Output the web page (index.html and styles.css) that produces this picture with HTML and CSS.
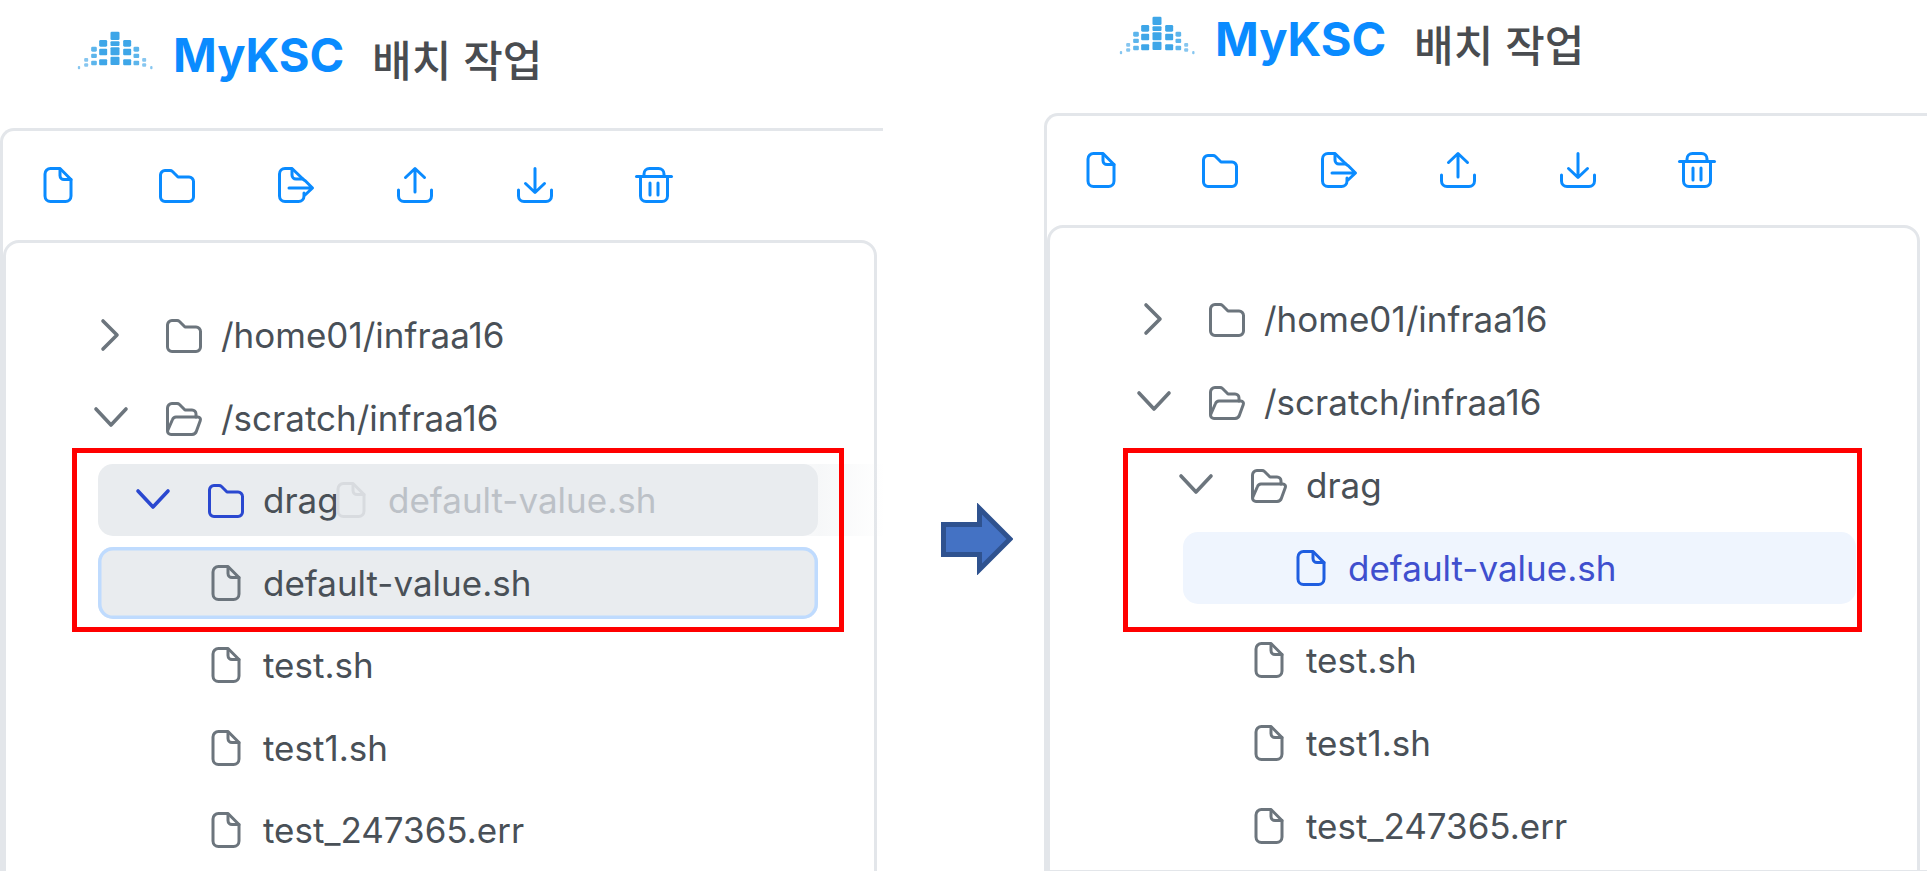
FILE: index.html
```html
<!DOCTYPE html>
<html lang="ko">
<head>
<meta charset="utf-8">
<title>MyKSC 배치 작업</title>
<link rel="stylesheet" href="styles.css">
</head>
<body>
<svg class="defs" width="0" height="0" aria-hidden="true">
  <defs>
    <symbol id="i-file" viewBox="0 0 40 40"><path d="M12.500 3.500H22L33 14.500V31a5.500 5.500 0 0 1-5.500 5.500h-15A5.500 5.500 0 0 1 7 31V9a5.500 5.500 0 0 1 5.500-5.500Z"/><path d="M22 4v6.500a4 4 0 0 0 4 4h7"/></symbol>
    <symbol id="i-folder" viewBox="0 0 40 40"><path d="M8 5.500h5a3.500 3.500 0 0 1 2.500 1L21 12h11a4.500 4.500 0 0 1 4.500 4.500V32a4.500 4.500 0 0 1-4.500 4.500H8A4.500 4.500 0 0 1 3.500 32V10A4.500 4.500 0 0 1 8 5.500Z"/></symbol>
    <symbol id="i-folder-open" viewBox="0 0 40 40"><path d="M3.500 32V10A4.500 4.500 0 0 1 8 5.500h5a3.500 3.500 0 0 1 2.500 1L21 12h7a4 4 0 0 1 4 4v3"/><path d="M3.500 33 8.500 21.500A4 4 0 0 1 12 19h22a2.500 2.500 0 0 1 2.300 3.400L32.500 33a5 5 0 0 1-4.500 3.500H7A3.500 3.500 0 0 1 3.500 33Z"/></symbol>
    <symbol id="i-export" viewBox="0 0 40 40"><path d="M28 15 16 3.500H9A5.500 5.500 0 0 0 3.500 9v22A5.500 5.500 0 0 0 9 36.500h13.500A5.500 5.500 0 0 0 28 31v-3"/><path d="M16 4v6a4 4 0 0 0 4 4h7"/><path d="M13 23h23M29 15.500 36.500 23 29 30"/></symbol>
    <symbol id="i-upload" viewBox="0 0 40 40"><path d="M3.500 25v6A5.500 5.500 0 0 0 9 36.500h22a5.500 5.500 0 0 0 5.500-5.500v-6"/><path d="M20 27V4M10.500 12.500 20 3.500l9.500 9"/></symbol>
    <symbol id="i-download" viewBox="0 0 40 40"><path d="M3.500 25v6A5.500 5.500 0 0 0 9 36.500h22a5.500 5.500 0 0 0 5.500-5.500v-6"/><path d="M20 3.500V27M10.500 18.500 20 27.500l9.500-9"/></symbol>
    <symbol id="i-trash" viewBox="0 0 40 40"><path d="M2.500 11.500h35"/><path d="M10 11V9a5.500 5.500 0 0 1 5.500-5.500h9A5.500 5.500 0 0 1 30 9v2"/><path d="M6.500 11.500V31a5.500 5.500 0 0 0 5.500 5.500h16a5.500 5.500 0 0 0 5.500-5.500V11.500"/><path d="M16 18v12M24 18v12"/></symbol>
    <symbol id="i-right" viewBox="0 0 40 40"><path d="M12 6 26 20 12 34"/></symbol>
    <symbol id="i-down" viewBox="0 0 40 40"><path d="M5 11 20 27 35 11"/></symbol>
    <symbol id="i-logo" viewBox="50 60 230 120">
      <g fill="#3ea6e8">
        <rect x="150" y="65" width="27" height="25" rx="4"/><rect x="150" y="94" width="27" height="14" rx="3"/><rect x="150" y="112" width="27" height="24" rx="3"/><rect x="150" y="140" width="27" height="25" rx="3"/>
        <rect x="116" y="90" width="24" height="20" rx="4"/><rect x="116" y="116" width="24" height="20" rx="3"/><rect x="116" y="148" width="24" height="18" rx="3"/>
        <rect x="188" y="90" width="24" height="20" rx="4"/><rect x="188" y="116" width="24" height="20" rx="3"/><rect x="188" y="148" width="24" height="18" rx="3"/>
      </g>
      <g fill="#5cb5ec">
        <rect x="92" y="110" width="17" height="15" rx="4"/><rect x="92" y="131" width="17" height="13" rx="3"/><rect x="92" y="152" width="17" height="14" rx="3"/>
        <rect x="219" y="110" width="17" height="15" rx="4"/><rect x="219" y="131" width="17" height="13" rx="3"/><rect x="219" y="152" width="17" height="14" rx="3"/>
      </g>
      <g fill="#86c6f0">
        <rect x="71" y="144" width="12" height="11" rx="3"/><rect x="71" y="160" width="12" height="10" rx="3"/>
        <rect x="245" y="144" width="12" height="11" rx="3"/><rect x="245" y="160" width="12" height="10" rx="3"/>
        <rect x="52" y="168" width="7" height="10" rx="3"/><rect x="269" y="168" width="7" height="10" rx="3"/>
      </g>
    </symbol>
  </defs>
</svg>

<main class="canvas">
  <section class="shot shot-before">
    <header class="head">
      <svg class="logo-mark"><use href="#i-logo"/></svg>
      <span class="brand">MyKSC</span>
      <h1 class="title">배치 작업</h1>
    </header>
    <div class="outer">
      <div class="toolbar">
        <svg class="ico"><use href="#i-file"/></svg>
        <svg class="ico"><use href="#i-folder"/></svg>
        <svg class="ico"><use href="#i-export"/></svg>
        <svg class="ico"><use href="#i-upload"/></svg>
        <svg class="ico"><use href="#i-download"/></svg>
        <svg class="ico"><use href="#i-trash"/></svg>
      </div>
      <div class="inner">
        <ul class="tree">
          <li class="row"><svg class="chev"><use href="#i-right"/></svg><svg class="nico"><use href="#i-folder"/></svg><span>/home01/infraa16</span></li>
          <li class="row"><svg class="chev"><use href="#i-down"/></svg><svg class="nico"><use href="#i-folder-open"/></svg><span>/scratch/infraa16</span></li>
          <li>
            <ul class="tree sub">
              <li class="row hover"><svg class="chev"><use href="#i-down"/></svg><svg class="nico"><use href="#i-folder"/></svg><span>drag</span>
                <div class="ghost"><svg class="nico"><use href="#i-file"/></svg><span>default-value.sh</span></div>
              </li>
              <li class="row dragging"><span class="chev"></span><svg class="nico"><use href="#i-file"/></svg><span>default-value.sh</span></li>
              <li class="row"><span class="chev"></span><svg class="nico"><use href="#i-file"/></svg><span>test.sh</span></li>
              <li class="row"><span class="chev"></span><svg class="nico"><use href="#i-file"/></svg><span>test1.sh</span></li>
              <li class="row"><span class="chev"></span><svg class="nico"><use href="#i-file"/></svg><span>test_247365.err</span></li>
            </ul>
          </li>
        </ul>
      </div>
    </div>
    <div class="mark mark-left"></div>
  </section>

  <div class="arrow-col">
    <svg class="arrow" viewBox="0 0 72 72"><path d="M2.500 21.500H38.500V5.500L69 36 38.500 66.500V51.500H2.500Z"/></svg>
  </div>

  <section class="shot shot-after">
    <header class="head">
      <svg class="logo-mark"><use href="#i-logo"/></svg>
      <span class="brand">MyKSC</span>
      <h1 class="title">배치 작업</h1>
    </header>
    <div class="outer">
      <div class="toolbar">
        <svg class="ico"><use href="#i-file"/></svg>
        <svg class="ico"><use href="#i-folder"/></svg>
        <svg class="ico"><use href="#i-export"/></svg>
        <svg class="ico"><use href="#i-upload"/></svg>
        <svg class="ico"><use href="#i-download"/></svg>
        <svg class="ico"><use href="#i-trash"/></svg>
      </div>
      <div class="inner">
        <ul class="tree wide">
          <li class="row"><svg class="chev"><use href="#i-right"/></svg><svg class="nico"><use href="#i-folder"/></svg><span>/home01/infraa16</span></li>
          <li class="row"><svg class="chev"><use href="#i-down"/></svg><svg class="nico"><use href="#i-folder-open"/></svg><span>/scratch/infraa16</span></li>
          <li>
            <ul class="tree sub wide">
              <li class="row"><svg class="chev"><use href="#i-down"/></svg><svg class="nico"><use href="#i-folder-open"/></svg><span>drag</span></li>
              <li>
                <ul class="tree sub wide">
                  <li class="row selected"><span class="chev"></span><svg class="nico"><use href="#i-file"/></svg><span>default-value.sh</span></li>
                </ul>
              </li>
              <li class="row after-open"><span class="chev"></span><svg class="nico"><use href="#i-file"/></svg><span>test.sh</span></li>
              <li class="row"><span class="chev"></span><svg class="nico"><use href="#i-file"/></svg><span>test1.sh</span></li>
              <li class="row"><span class="chev"></span><svg class="nico"><use href="#i-file"/></svg><span>test_247365.err</span></li>
            </ul>
          </li>
        </ul>
      </div>
    </div>
    <div class="mark mark-right"></div>
  </section>
</main>
</body>
</html>
```

FILE: styles.css
```css
* { box-sizing: border-box; }

html, body {
  margin: 0;
  height: 871px;
  overflow: hidden;
  background: #fff;
}

body {
  font-family: Inter, "Noto Sans CJK KR", sans-serif;
  color: #495057;
}

.defs { position: absolute; }

ul { list-style: none; margin: 0; padding: 0; }

svg {
  fill: none;
  stroke: currentColor;
  stroke-width: 3;
  stroke-linecap: round;
  stroke-linejoin: round;
  flex: none;
}

.canvas {
  display: flex;
  height: 871px;
  overflow: hidden;
}

.shot {
  position: relative;
  flex: none;
  width: 883px;
  height: 871px;
  overflow: hidden;
}

.head {
  display: flex;
  align-items: flex-start;
  height: 128px;
  padding: 30px 0 0 77px;
}

.shot-after .head {
  height: 113px;
  padding: 15px 0 0 75px;
}

.logo-mark {
  width: 77px;
  height: 40px;
  stroke: none;
}

.brand {
  margin: -5px 0 0 19px;
  font-size: 47px;
  line-height: 60px;
  font-weight: 700;
  letter-spacing: -0.1px;
  color: #0a8bff;
}

.shot-after .brand { margin-top: -6px; }

.title {
  margin: -2px 0 0 28px;
  font-family: "Noto Sans CJK KR", sans-serif;
  font-size: 43px;
  line-height: 60px;
  font-weight: 500;
  color: #494c50;
}

.outer {
  width: 900px;
  height: 760px;
  border: 3px solid #e3e6ea;
  border-right: 0;
  border-radius: 14px 0 0 0;
}

.toolbar {
  display: flex;
  gap: 79.300px;
  height: 109px;
  padding: 34px 0 0 33.500px;
  color: #0a8bff;
}

.shot-before .toolbar { padding-left: 34.500px; }

.ico { width: 40px; height: 40px; }

.inner {
  width: 873px;
  height: 660px;
  border: 3px solid #e3e6ea;
  border-radius: 16px 16px 0 0;
}

.shot-before .inner { width: 874px; }

.inner > .tree { padding: 55px 56px 0 49px; }

.shot-before .inner > .tree { padding: 56px 56px 0 50px; }

.tree {
  display: flex;
  flex-direction: column;
  gap: 10.500px;
}

.tree.wide { gap: 11px; }

.sub { margin-left: 42px; }

.row {
  position: relative;
  display: flex;
  align-items: center;
  height: 72px;
  padding-left: 35px;
  border-radius: 15px;
  font-size: 35px;
  line-height: 72px;
  white-space: nowrap;
}

.chev {
  width: 40px;
  height: 40px;
  color: #6c757d;
  stroke-width: 3.600;
}

.nico {
  width: 40px;
  height: 40px;
  margin: 0 17px 0 33px;
  color: #6c757d;
}

.hover { background: #e9ecef; }
.hover .chev, .hover > .nico { color: #2a48d0; }

.dragging {
  background: #e9ecef;
  box-shadow: inset 0 0 0 3.500px #bfdbfe;
}

.selected {
  margin-right: 5px;
  background: #eff5fe;
  color: #3f4fce;
}

.selected .nico { color: #1f5ee0; }

/* ghost image that follows the pointer during the drag */
.ghost {
  position: absolute;
  left: 233px;
  top: 0;
  display: flex;
  align-items: center;
  width: 555px;
  height: 72px;
  color: #bcc1c7;
  background: linear-gradient(90deg, transparent 78%, rgba(233, 236, 239, 0.4) 88%, transparent);
}

.ghost .nico {
  margin: 0 17px 0 0;
  color: #d8dbdf;
}

.after-open { margin-top: 9px; }

/* arrow between the "before" and "after" captures */
.arrow-col {
  flex: none;
  width: 161px;
  padding: 503px 0 0 58px;
}

.arrow {
  width: 72px;
  height: 72px;
  stroke: #2f528f;
  stroke-width: 5;
  stroke-linecap: butt;
  stroke-linejoin: miter;
  fill: #4472c4;
}

/* red highlight frames drawn over the captures */
.mark {
  position: absolute;
  top: 448px;
  height: 184px;
  border: 5px solid #ff0000;
}

.mark-left { left: 72px; width: 772px; }
.mark-right { left: 79px; width: 739px; }
```
